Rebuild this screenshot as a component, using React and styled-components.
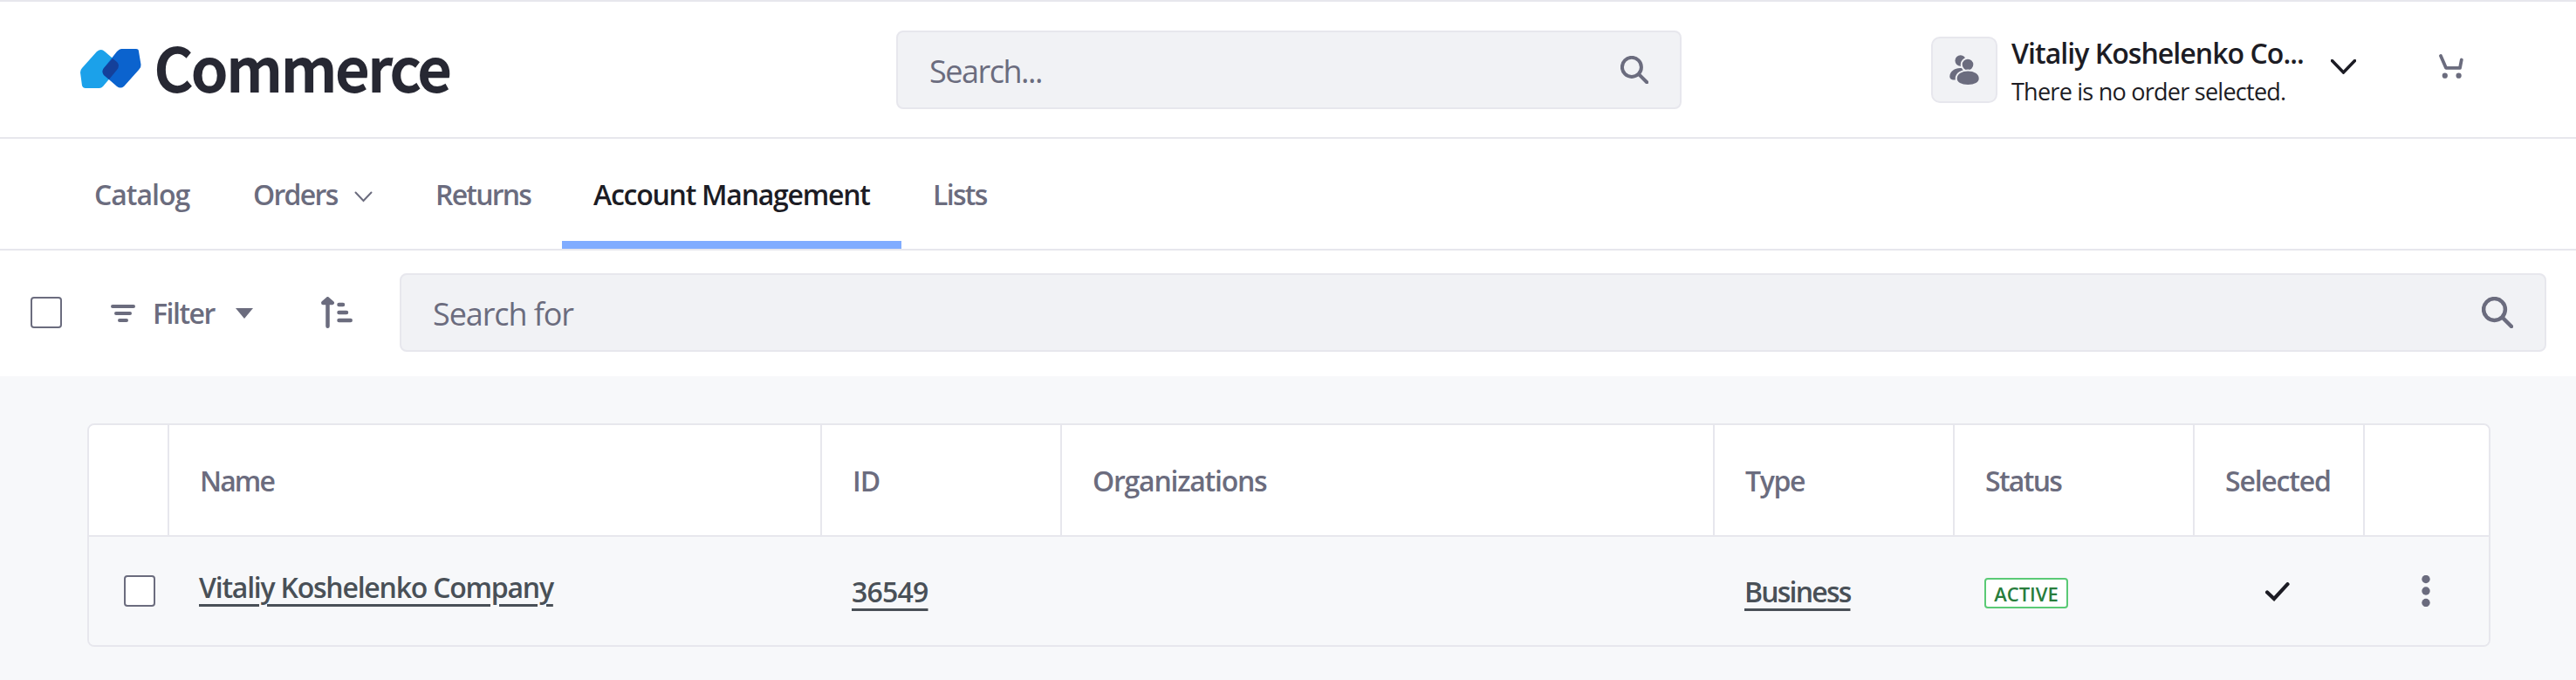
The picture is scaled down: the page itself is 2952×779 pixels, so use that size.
import React from "react";
import styled, { createGlobalStyle } from "styled-components";

const Global = createGlobalStyle`
  * { box-sizing: border-box; }
  html, body { margin: 0; background: #f7f8fa; }
  body { font-family: "Open Sans", "Noto Sans", sans-serif; color: #1c1c24; }
`;

const gray = "#6b6c7e";
const line = "#e7e7ed";

const Page = styled.div`
  width: 2952px;
  height: 779px;
  overflow: hidden;
  background: #f7f8fa;
`;

/* Text whose natural width is adjusted with letter spacing */
const Label = styled.span`
  font-size: ${(p) => p.$size || 32}px;
  font-weight: ${(p) => p.$weight || 600};
  color: ${(p) => p.$color || gray};
  letter-spacing: ${(p) => p.$track ?? -1.3}px;
  line-height: ${(p) => p.$line || 48}px;
  white-space: nowrap;
`;

const Header = styled.header`
  display: flex;
  align-items: center;
  height: 159px;
  padding: 1px 0 0 92px;
  background: #fff;
  border-top: 2px solid ${line};
  border-bottom: 2px solid ${line};
`;

const Brand = styled.div`
  display: flex;
  align-items: center;
  gap: 15px;
  width: 935px;
  padding-bottom: 2px;
`;

const BrandName = styled.span`
  font-family: "Noto Sans CJK JP", sans-serif;
  font-weight: 500;
  font-size: 68px;
  line-height: 74px;
  height: 80px;
  letter-spacing: -1.6px;
  -webkit-text-stroke: 1.8px #272833;
  color: #272833;
`;

const SearchBox = styled.div`
  display: flex;
  align-items: center;
  justify-content: space-between;
  width: ${(p) => p.$width}px;
  height: 90px;
  padding: 0 36px;
  background: #f1f2f5;
  border: 2px solid ${line};
  border-radius: 8px;
`;

const Placeholder = styled(Label)`
  padding-top: 3px;
  font-size: 36px;
  font-weight: 400;
`;

const Account = styled.div`
  display: flex;
  align-items: center;
  margin-left: 286px;
`;

const Actions = styled.div`
  display: flex;
  align-items: center;
  gap: 95px;
  padding-bottom: 8px;
`;

const Avatar = styled.div`
  display: flex;
  align-items: center;
  justify-content: center;
  width: 76px;
  height: 76px;
  background: #f1f2f5;
  border: 2px solid ${line};
  border-radius: 10px;
`;

const AccountText = styled.div`
  display: flex;
  flex-direction: column;
  width: 382px;
  padding: 4px 0 0 16px;
`;

const Nav = styled.nav`
  display: flex;
  height: 128px;
  padding-left: 72px;
  background: #fff;
  border-bottom: 2px solid ${line};
`;

const Tab = styled.a`
  display: flex;
  align-items: center;
  gap: 19px;
  width: ${(p) => p.$width}px;
  padding: 11px 0 0 36px;
  border-bottom: 9px solid ${(p) => (p.$active ? "#80acff" : "transparent")};

  svg {
    margin-top: 5px;
  }
`;

const Toolbar = styled.div`
  display: flex;
  align-items: center;
  height: 144px;
  padding: 0 34px 2px 35px;
  background: #fff;
`;

const Checkbox = styled.span`
  width: 36px;
  height: 36px;
  background: #fff;
  border: 2px solid ${gray};
  border-radius: 4px;
`;

const FilterButton = styled.div`
  display: flex;
  align-items: center;
  width: 239px;
  padding: 2px 0 0 56px;
`;

const SortButton = styled.div`
  display: flex;
  width: 148px;
  padding-left: 58px;
`;

const Table = styled.div`
  width: 2754px;
  margin: 54px 0 0 100px;
  border: 2px solid ${line};
  border-radius: 8px;
  overflow: hidden;
`;

const Row = styled.div`
  display: grid;
  grid-template-columns: 92px 748px 275px 748px 275px 275px 195px 142px;
  height: ${(p) => (p.$head ? 128 : 124)}px;
  background: ${(p) => (p.$head ? "#fff" : "#f7f8fa")};
  border-bottom: ${(p) => (p.$head ? `2px solid ${line}` : "0")};
`;

const Cell = styled.div`
  display: flex;
  align-items: center;
  padding-left: ${(p) => p.$left ?? (p.$head ? 35 : 34)}px;
  padding-top: ${(p) => p.$top || 0}px;
  padding-bottom: ${(p) => p.$lift || 0}px;
  border-right: ${(p) => (p.$head && !p.$last ? `2px solid ${line}` : "0")};
`;

const Link = styled(Label)`
  color: #495057;
  text-decoration: underline;
  text-decoration-thickness: 3px;
  text-underline-offset: 7px;
`;

const Badge = styled.span`
  display: flex;
  align-items: center;
  justify-content: center;
  width: 96px;
  height: 35px;
  background: #fff;
  border: 2px solid #5aca75;
  border-radius: 4px;
`;

const Gap = styled.span`
  width: ${(p) => p.$w}px;
`;

const Logo = () => (
  <svg width="70" height="46" viewBox="0 0 70 46">
    <path d="M19 3Q24-1 28 3L42 15Q46 19 42 24L26 43Q24 45 22 45H6Q3 45 2 42L0 27Q0 24 2 22Z" fill="#1ba1ea" />
    <path d="M42 3Q45 0 47 0H64Q67 0 67 3L69.500 18Q70 21 67 24L50 43Q46 46 42 43L27 30Q24 26 27 22Z" fill="#0b63ce" />
    <path d="M37 11L42 15Q46 19 42 24L33 35L27 30Q24 26 27 22Z" fill="#14409a" />
  </svg>
);

const Magnifier = ({ size }) => (
  <svg width={size} height={size} viewBox="0 0 36 36" fill="none" stroke={gray} strokeLinecap="round">
    <circle cx="14.500" cy="14.500" r="12.400" strokeWidth="4.500" />
    <path d="M24 24L34 34" strokeWidth="4.500" />
  </svg>
);

const Users = () => (
  <svg width="36" height="36" viewBox="-1 -1 36 36" fill={gray}>
    <circle cx="12.700" cy="6.500" r="6.200" />
    <path d="M.3 24.500C.3 19 6 15 12 15H16V27L6 28.600H4Q.3 28 .3 24.500Z" />
    <g stroke="#f1f2f5" strokeWidth="2">
      <circle cx="21" cy="11" r="7.300" />
      <path d="M7.700 27C7.700 21 14 17.500 21.200 17.500S34.700 21 34.700 27C34.700 32 29 34.900 21.200 34.900S7.700 32 7.700 27Z" />
    </g>
  </svg>
);

const Chevron = ({ w, h, stroke, color }) => (
  <svg width={w} height={h} viewBox={`0 0 ${w} ${h}`} fill="none">
    <path d={`M1.500 1.500L${w / 2} ${h - 2}L${w - 1.5} 1.500`} stroke={color} strokeWidth={stroke} strokeLinecap="round" />
  </svg>
);

const Cart = () => (
  <svg width="28" height="28" viewBox="0 0 28 28" fill="none" stroke={gray} strokeWidth="3.800" strokeLinecap="round" strokeLinejoin="round">
    <path d="M2 2L8 15.800H24L25.800 6.500" />
    <circle cx="6.800" cy="24.700" r="3.100" fill={gray} stroke="none" />
    <circle cx="22.600" cy="24.700" r="3.100" fill={gray} stroke="none" />
  </svg>
);

const FilterIcon = () => (
  <svg width="28" height="20" viewBox="0 0 28 20" stroke={gray} strokeWidth="4" strokeLinecap="round">
    <path d="M2 2H26M6 10H22M10 18H18" />
  </svg>
);

const SortIcon = () => (
  <svg width="36" height="36" viewBox="0 0 36 36" fill="none" stroke={gray} strokeWidth="4.500" strokeLinecap="round" strokeLinejoin="round">
    <path d="M7.500 33.700V4M2.300 7L7.500 2.300L12.700 7Z" fill={gray} />
    <path d="M20.500 9H25M20.500 18H29M20.500 27H33.700" />
  </svg>
);

const Check = () => (
  <svg width="28" height="22" viewBox="0 0 28 22" fill="none" stroke="#1c1c24" strokeWidth="4.200" strokeLinecap="round">
    <path d="M2.100 11.500L10 19L25.500 2.200" />
  </svg>
);

const Dots = () => (
  <svg width="10" height="36" viewBox="0 0 10 36" fill={gray}>
    <circle cx="5" cy="4.500" r="4.700" />
    <circle cx="5" cy="18" r="4.700" />
    <circle cx="5" cy="31.500" r="4.700" />
  </svg>
);

const columns = [
  { text: "" },
  { text: "Name", track: -1.9 },
  { text: "ID", track: -1 },
  { text: "Organizations", track: -1.23 },
  { text: "Type", track: -1.4 },
  { text: "Status", track: -1.7 },
  { text: "Selected", track: -1.2 },
  { text: "" },
];

export default function App() {
  return (
    <Page>
      <Global />
      <Header>
        <Brand>
          <Logo />
          <BrandName>Commerce</BrandName>
        </Brand>
        <SearchBox $width={900}>
          <Placeholder $track={-1.5}>Search...</Placeholder>
          <Magnifier size={32} />
        </SearchBox>
        <Account>
          <Avatar><Users /></Avatar>
          <AccountText>
            <Label $line={44} $track={-0.95} $color="#1c1c24">Vitaliy Koshelenko Co...</Label>
            <Label $line={43} $size={27} $weight={400} $track={-0.75} $color="#1c1c24">There is no order selected.</Label>
          </AccountText>
          <Actions>
            <Chevron w={29} h={17} stroke={3.5} color="#1c1c24" />
            <Cart />
          </Actions>
        </Account>
      </Header>
      <Nav>
        <Tab $width={182}><Label $track={-1}>Catalog</Label></Tab>
        <Tab $width={209}><Label $track={-1.7}>Orders</Label><Chevron w={21} h={13} stroke={2} color={gray} /></Tab>
        <Tab $width={181}><Label $track={-1.8}>Returns</Label></Tab>
        <Tab $width={389} $active><Label $track={-1.25} $color="#1c1c24">Account Management</Label></Tab>
        <Tab $width={140}><Label $track={-1.7}>Lists</Label></Tab>
      </Nav>
      <Toolbar>
        <Checkbox />
        <FilterButton>
          <FilterIcon />
          <Gap $w={20} />
          <Label $track={-1.5}>Filter</Label>
          <Gap $w={24} />
          <svg width="20" height="12" viewBox="0 0 20 12" fill={gray}><path d="M0 0H20L10 12Z" /></svg>
        </FilterButton>
        <SortButton><SortIcon /></SortButton>
        <SearchBox $width={2460}>
          <Placeholder $track={-1.1}>Search for</Placeholder>
          <Magnifier size={36} />
        </SearchBox>
      </Toolbar>
      <Table>
        <Row $head>
          {columns.map((c, i) => (
            <Cell key={i} $head $top={1} $last={i === 7}><Label $track={c.track}>{c.text}</Label></Cell>
          ))}
        </Row>
        <Row>
          <Cell $left={40}><Checkbox /></Cell>
          <Cell $lift={8}><Link $track={-1.23}>Vitaliy Koshelenko Company</Link></Cell>
          <Cell $top={2}><Link $track={-0.8}>36549</Link></Cell>
          <Cell />
          <Cell $top={2}><Link $track={-1.8}>Business</Link></Cell>
          <Cell $top={5}><Badge><Label $line={30} $size={22} $track={0} $color="#287d3c">ACTIVE</Label></Badge></Cell>
          <Cell $left={81} $top={2}><Check /></Cell>
          <Cell $left={65}><Dots /></Cell>
        </Row>
      </Table>
    </Page>
  );
}
